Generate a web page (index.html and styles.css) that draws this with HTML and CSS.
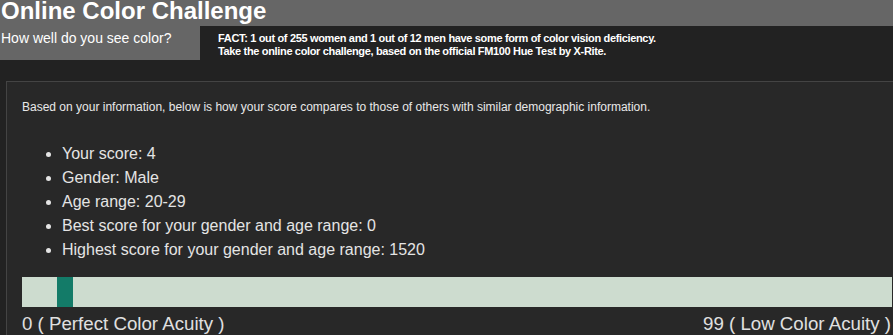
FILE: index.html
```html
<!DOCTYPE html>
<html>
<head>
<meta charset="utf-8">
<title>Online Color Challenge</title>
<link rel="stylesheet" href="styles.css">
</head>
<body>
<header class="header">
  <h1 class="title">Online Color Challenge</h1>
  <div class="subrow">
    <div class="tagline">How well do you see color?</div>
    <div class="fact">FACT: 1 out of 255 women and 1 out of 12 men have some form of color vision deficiency.<br>Take the online color challenge, based on the official FM100 Hue Test by X-Rite.</div>
  </div>
</header>
<section class="panel">
  <p class="intro">Based on your information, below is how your score compares to those of others with similar demographic information.</p>
  <ul class="stats">
    <li>Your score: 4</li>
    <li>Gender: Male</li>
    <li>Age range: 20-29</li>
    <li>Best score for your gender and age range: 0</li>
    <li>Highest score for your gender and age range: 1520</li>
  </ul>
  <div class="bar">
    <div class="marker" style="left: 4.04%"></div>
  </div>
  <div class="scale">
    <span>0 ( Perfect Color Acuity )</span>
    <span>99 ( Low Color Acuity )</span>
  </div>
</section>
</body>
</html>
```

FILE: styles.css
```css
html {
  overflow: hidden;
}
body {
  margin: 0;
  background: #222222;
  font-family: "Liberation Sans", Arial, sans-serif;
  color: #e4e4e4;
}
.header {
  background: #222222;
}
.title {
  margin: 0;
  height: 26px;
  padding-left: 1px;
  background: #666666;
  color: #ffffff;
  font-size: 24px;
  font-weight: bold;
  line-height: 22px;
}
.subrow {
  display: flex;
  height: 34px;
}
.tagline {
  width: 199px;
  padding: 4px 0 0 1px;
  background: #666666;
  color: #ffffff;
  font-size: 14px;
  line-height: 17px;
}
.fact {
  padding: 6px 0 0 18px;
  color: #ffffff;
  font-size: 11px;
  font-weight: bold;
  letter-spacing: -0.34px;
  line-height: 13px;
}
.panel {
  margin: 21px 0 0 6px;
  border: 1px solid #444444;
  border-right: none;
  border-bottom: none;
  background: #282828;
  padding: 18px 1px 0 15px;
}
.intro {
  margin: 0;
  font-size: 12px;
  line-height: 14px;
  color: #e8e8e8;
}
.stats {
  margin: 28px 0 0;
  padding-left: 40px;
  font-size: 16px;
  line-height: 24px;
}
.bar {
  position: relative;
  margin-top: 15px;
  height: 30px;
  background: #cddccf;
}
.marker {
  position: absolute;
  top: 0;
  width: 16px;
  height: 30px;
  background: #137b68;
}
.scale {
  display: flex;
  justify-content: space-between;
  margin-top: 6px;
  padding-right: 1px;
  font-size: 18.7px;
  line-height: 22px;
  color: #e0e0e0;
}
```
